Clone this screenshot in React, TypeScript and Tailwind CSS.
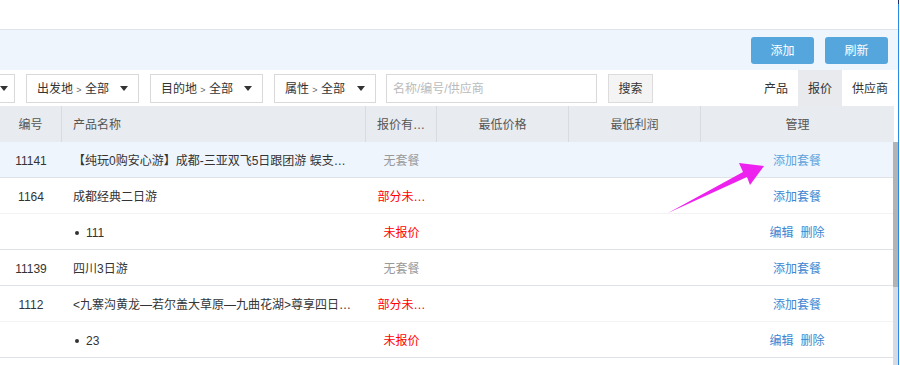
import React from "react";

const FONT = '"Liberation Sans", "Noto Sans CJK SC", sans-serif';

function Caret() {
  return (
    <svg width="8" height="5" viewBox="0 0 8 5" className="shrink-0">
      <polygon points="0,0 8,0 4,5" fill="#333" />
    </svg>
  );
}

function Dropdown({ label, w }: { label: string; w: string }) {
  return (
    <div className={`${w} h-[29px] border border-[#d9d9d9] bg-white flex items-center pl-[10px] pr-[10px] justify-between`}>
      <span className="text-[12px] text-[#333] whitespace-nowrap pt-px">
        {label} <span className="text-[9px] text-[#666]">&gt;</span> 全部
      </span>
      <Caret />
    </div>
  );
}

type Row = {
  id?: string;
  name: string;
  sub?: boolean;
  status: string;
  statusColor: string;
  action: "add" | "edit";
  highlight?: boolean;
  border: "dark" | "light";
};

const rows: Row[] = [
  { id: "11141", name: "【纯玩0购安心游】成都-三亚双飞5日跟团游 蜈支…", status: "无套餐", statusColor: "text-[#999]", action: "add", highlight: true, border: "dark" },
  { id: "1164", name: "成都经典二日游", status: "部分未…", statusColor: "text-[#f00]", action: "add", border: "light" },
  { name: "111", sub: true, status: "未报价", statusColor: "text-[#f00]", action: "edit", border: "dark" },
  { id: "11139", name: "四川3日游", status: "无套餐", statusColor: "text-[#999]", action: "add", border: "dark" },
  { id: "1112", name: "<九寨沟黄龙—若尔盖大草原—九曲花湖>尊享四日…", status: "部分未…", statusColor: "text-[#f00]", action: "add", border: "light" },
  { name: "23", sub: true, status: "未报价", statusColor: "text-[#f00]", action: "edit", border: "dark" },
];

export default function App() {
  return (
    <div className="relative w-[900px] h-[365px] overflow-hidden bg-white flex" style={{ fontFamily: FONT }}>
      <div className="w-[898px] flex flex-col">
        {/* top white strip */}
        <div className="h-[30px] border-b border-[#dde4ec] bg-white shrink-0" />
        {/* blue band with buttons */}
        <div className="h-[40px] bg-[#eef5fd] flex items-center justify-end gap-[11px] pr-[10px] shrink-0">
          <button className="w-[63px] h-[27px] rounded-[3px] bg-[#55a6dd] text-white text-[12px] pt-px">添加</button>
          <button className="w-[63px] h-[27px] rounded-[3px] bg-[#55a6dd] text-white text-[12px] pt-px">刷新</button>
        </div>
        {/* filter row */}
        <div className="h-[36px] flex items-center shrink-0">
          <div className="w-[15px] h-[29px] border-y border-r border-[#d9d9d9] flex items-center">
            <Caret />
          </div>
          <div className="ml-[11px]">
            <Dropdown label="出发地" w="w-[113px]" />
          </div>
          <div className="ml-[11px]">
            <Dropdown label="目的地" w="w-[113px]" />
          </div>
          <div className="ml-[11px]">
            <Dropdown label="属性" w="w-[102px]" />
          </div>
          <div className="ml-[10px] w-[211px] h-[29px] border border-[#d9d9d9] flex items-center pl-[6px] pt-px text-[12px] text-[#bbb]">
            名称/编号/供应商
          </div>
          <button className="ml-[11px] w-[45px] h-[29px] border border-[#dcdcdc] bg-[#f4f4f4] text-[12px] text-[#333] pt-px">搜索</button>
          <div className="ml-auto flex h-full text-[12px] text-[#333]">
            <div className="px-[10px] flex items-center pt-px">产品</div>
            <div className="px-[10px] flex items-center pt-px bg-[#e8eaee]">报价</div>
            <div className="px-[10px] flex items-center pt-px">供应商</div>
          </div>
        </div>
        {/* table header */}
        <div className="h-[36px] w-[894px] bg-[#e8ebef] flex text-[12px] text-[#555] shrink-0">
          <div className="w-[62px] flex items-center justify-center pt-[2px] border-r border-[#d8dce2]">编号</div>
          <div className="w-[304px] flex items-center pl-[11px] pt-[2px] border-r border-[#d8dce2]">产品名称</div>
          <div className="w-[71px] flex items-center justify-center pt-[2px] border-r border-[#d8dce2]">报价有…</div>
          <div className="w-[132px] flex items-center justify-center pt-[2px] border-r border-[#d8dce2]">最低价格</div>
          <div className="w-[132px] flex items-center justify-center pt-[2px] border-r border-[#d8dce2]">最低利润</div>
          <div className="flex-1 flex items-center justify-center pt-[2px]">管理</div>
        </div>
        {/* table body with scrollbar */}
        <div className="flex flex-1 min-h-0">
          <div className="w-[893px] flex flex-col">
            {rows.map((r, i) => (
              <div
                key={i}
                className={`h-[36px] shrink-0 flex pt-[2px] text-[12px] text-[#333] border-b ${
                  r.border === "dark" ? "border-[#dfe3e8]" : "border-[#f2f3f5]"
                } ${r.highlight ? "bg-[#eef5fd]" : "bg-white"}`}
              >
                <div className="w-[62px] flex items-center justify-center">{r.id ?? ""}</div>
                <div className="w-[304px] flex items-center pl-[11px] pr-[14px] whitespace-nowrap overflow-hidden">
                  {r.sub ? (
                    <span className="flex items-center">
                      <span className="inline-block w-[4px] h-[4px] rounded-full bg-[#333] ml-[2px] mr-[7px]" />
                      <span>{r.name}</span>
                    </span>
                  ) : (
                    r.name
                  )}
                </div>
                <div className={`w-[71px] flex items-center justify-center whitespace-nowrap ${r.statusColor}`}>{r.status}</div>
                <div className="w-[132px]" />
                <div className="w-[132px]" />
                <div className="flex-1 flex items-center justify-center">
                  {r.action === "add" ? (
                    <span className={r.highlight ? "text-[#5fa3dc]" : "text-[#3d86d2]"}>添加套餐</span>
                  ) : (
                    <span className="flex gap-[7px] text-[#3d86d2]">
                      <span>编辑</span>
                      <span>删除</span>
                    </span>
                  )}
                </div>
              </div>
            ))}
          </div>
          <div className="w-[5px] flex flex-col">
            <div className="h-[145px] bg-[#b3b3b3]" />
            <div className="flex-1 bg-[#d6dbe3]" />
          </div>
        </div>
      </div>
      <div className="w-px flex flex-col">
        <div className="h-[4px] bg-[#1b2a6b]" />
        <div className="flex-1 bg-[#2a8be6]" />
      </div>
      <div className="w-px bg-white" />
      {/* magenta arrow annotation */}
      <svg className="absolute left-0 top-0 pointer-events-none" width="900" height="365">
        <polygon points="668,213 743,172 739,163 764,166 750,185 747,177" fill="#ee22ee" />
      </svg>
    </div>
  );
}
